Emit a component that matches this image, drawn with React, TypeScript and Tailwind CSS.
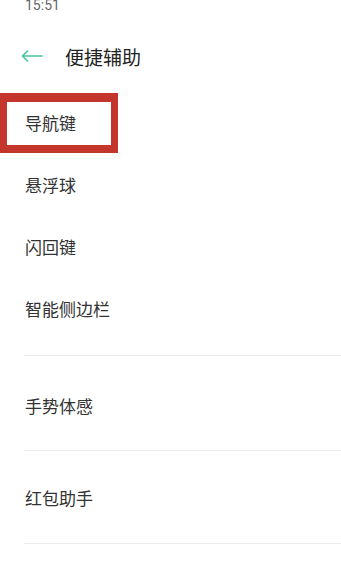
import React from "react";

const items1 = ["导航键", "悬浮球", "闪回键", "智能侧边栏"];

export default function App() {
  return (
    <div className="relative w-[341px] h-[568px] overflow-hidden bg-white font-['Noto_Sans_CJK_SC','Noto_Sans',sans-serif]">
      <div className="flex h-[30px] items-start pl-[25px]">
        <div className="relative -top-[2px] text-[14px] leading-[14px] text-[#666666] font-['Roboto',sans-serif]">15:51</div>
      </div>
      <div className="flex h-[52px] items-center pl-[21px]">
        <svg width="22" height="12" viewBox="0 0 22 12" fill="none" className="shrink-0">
          <path d="M1.5 6H21" stroke="#45c59a" strokeWidth="1.6" strokeLinecap="round" />
          <path d="M6.5 1L1.5 6L6.5 11" stroke="#45c59a" strokeWidth="1.6" strokeLinecap="round" strokeLinejoin="round" />
        </svg>
        <div className="ml-[22px] text-[19px] leading-none text-[#222222]">便捷辅助</div>
      </div>
      <div className="pt-[9px]">
        {items1.map((t) => (
          <div key={t} className="flex h-[62px] items-center pl-[25px] text-[17px] leading-none text-[#333333]">
            {t}
          </div>
        ))}
      </div>
      <div className="mt-[16px] ml-[24px] h-px bg-[#ececec]" />
      <div className="flex h-[94px] items-center pt-[4px] pl-[25px] text-[17px] leading-none text-[#333333]">手势体感</div>
      <div className="ml-[24px] h-px bg-[#ececec]" />
      <div className="flex h-[92px] items-center pl-[25px] text-[17px] leading-none text-[#333333]">红包助手</div>
      <div className="ml-[24px] h-px bg-[#ececec]" />
      <div className="absolute left-0 top-[93px] h-[60px] w-[118px] border-x-[7px] border-t-[9px] border-b-[8px] border-[#c4362c]" />
    </div>
  );
}
